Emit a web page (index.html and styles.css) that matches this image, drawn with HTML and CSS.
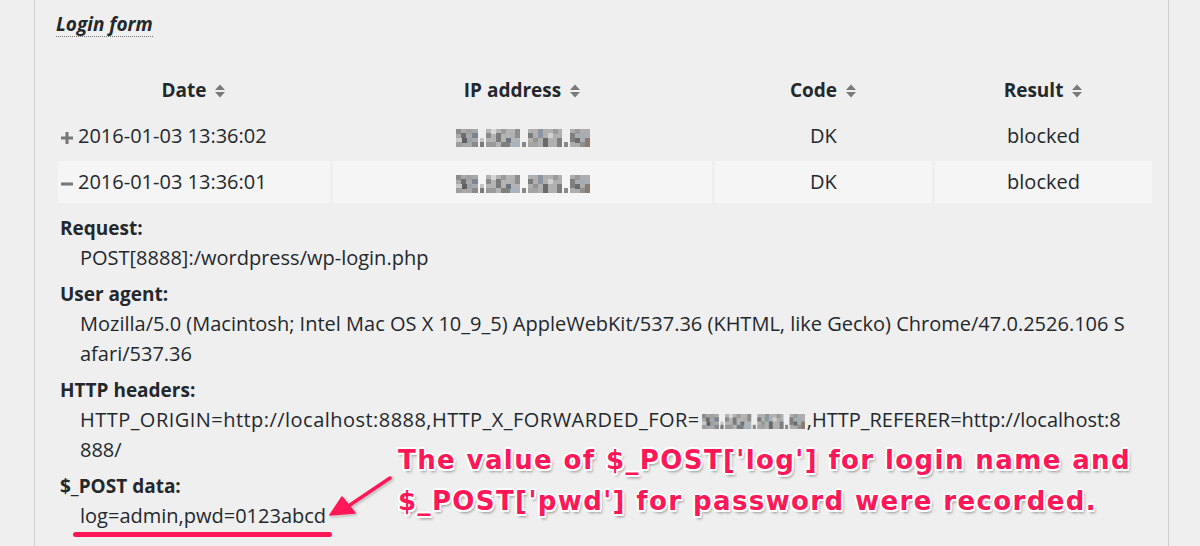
FILE: index.html
```html
<!DOCTYPE html>
<html>
<head>
<meta charset="utf-8">
<link rel="stylesheet" href="styles.css">
</head>
<body>
<svg class="defs" width="0" height="0">
  <defs>
    <symbol id="ip" viewBox="0 0 134 18" preserveAspectRatio="none">
      <rect x="0" y="0" width="22" height="18" fill="#a8a8a8"/>
      <rect x="0" y="0" width="5" height="5" fill="#8c8c8c"/>
      <rect x="5" y="4" width="5" height="5" fill="#6e6e6e"/>
      <rect x="10" y="0" width="6" height="5" fill="#a0a0a0"/>
      <rect x="16" y="4" width="6" height="5" fill="#7d8590"/>
      <rect x="0" y="9" width="6" height="5" fill="#c8c8c8"/>
      <rect x="6" y="9" width="5" height="5" fill="#5f5f5f"/>
      <rect x="11" y="9" width="5" height="5" fill="#9aa3ad"/>
      <rect x="16" y="13" width="6" height="5" fill="#8a8a8a"/>
      <rect x="0" y="13" width="6" height="5" fill="#9e9e9e"/>
      <rect x="24" y="9" width="4" height="9" fill="#c4c4c4"/>
      <rect x="24" y="13" width="4" height="5" fill="#7a7a7a"/>
      <rect x="30" y="0" width="34" height="18" fill="#b4b4b4"/>
      <rect x="30" y="4" width="5" height="5" fill="#8a8a8a"/>
      <rect x="35" y="0" width="5" height="5" fill="#d6d6d6"/>
      <rect x="40" y="4" width="5" height="9" fill="#7a7a7a"/>
      <rect x="45" y="0" width="5" height="5" fill="#9b9b9b"/>
      <rect x="50" y="9" width="5" height="5" fill="#6c7480"/>
      <rect x="55" y="4" width="5" height="5" fill="#b0b0b0"/>
      <rect x="59" y="0" width="5" height="9" fill="#8e8e8e"/>
      <rect x="30" y="13" width="10" height="5" fill="#9a9a9a"/>
      <rect x="45" y="13" width="9" height="5" fill="#7f7f7f"/>
      <rect x="55" y="13" width="9" height="5" fill="#a9b3bd"/>
      <rect x="66" y="13" width="4" height="5" fill="#888888"/>
      <rect x="72" y="0" width="34" height="18" fill="#b0b0b0"/>
      <rect x="72" y="4" width="5" height="5" fill="#7b7b7b"/>
      <rect x="77" y="9" width="5" height="5" fill="#939393"/>
      <rect x="82" y="0" width="5" height="9" fill="#8c95a0"/>
      <rect x="87" y="9" width="5" height="9" fill="#6a6a6a"/>
      <rect x="92" y="4" width="5" height="5" fill="#d0d0d0"/>
      <rect x="97" y="0" width="5" height="5" fill="#9a9a9a"/>
      <rect x="101" y="9" width="5" height="9" fill="#7e7e7e"/>
      <rect x="72" y="13" width="10" height="5" fill="#a4a4a4"/>
      <rect x="108" y="13" width="4" height="5" fill="#8a8a8a"/>
      <rect x="114" y="0" width="20" height="18" fill="#adadad"/>
      <rect x="114" y="4" width="5" height="9" fill="#7f7f7f"/>
      <rect x="119" y="0" width="5" height="5" fill="#9a9a9a"/>
      <rect x="119" y="9" width="5" height="5" fill="#6b6b6b"/>
      <rect x="124" y="4" width="5" height="5" fill="#a3adb8"/>
      <rect x="129" y="9" width="5" height="9" fill="#8a7a70"/>
      <rect x="124" y="13" width="5" height="5" fill="#909090"/>
    </symbol>
    <symbol id="sort" viewBox="0 0 12 16">
      <path d="M1 7 L6 1.5 L11 7 Z M1 9 L6 14.5 L11 9 Z" fill="#7a7a7a"/>
    </symbol>
  </defs>
</svg>

<div class="page">
  <div class="panel">
    <h3 class="title">Login form</h3>
    <table class="log">
      <colgroup>
        <col class="c-date"><col class="c-ip"><col class="c-code"><col class="c-res">
      </colgroup>
      <thead>
        <tr>
          <th>Date <svg class="sort"><use href="#sort"/></svg></th>
          <th>IP address <svg class="sort"><use href="#sort"/></svg></th>
          <th>Code <svg class="sort"><use href="#sort"/></svg></th>
          <th>Result <svg class="sort"><use href="#sort"/></svg></th>
        </tr>
      </thead>
      <tbody>
        <tr>
          <td class="date"><svg class="toggle" viewBox="0 0 12 12"><rect x="0" y="4.5" width="12" height="3" fill="#777"/><rect x="4.5" y="0" width="3" height="12" fill="#777"/></svg>2016-01-03 13:36:02</td>
          <td class="mid"><svg class="ipblur"><use href="#ip"/></svg></td>
          <td class="mid">DK</td>
          <td class="mid">blocked</td>
        </tr>
        <tr class="open">
          <td class="date"><svg class="toggle" viewBox="0 0 12 12"><rect x="0" y="4.5" width="12" height="3" fill="#777"/></svg>2016-01-03 13:36:01</td>
          <td class="mid"><svg class="ipblur"><use href="#ip"/></svg></td>
          <td class="mid">DK</td>
          <td class="mid">blocked</td>
        </tr>
      </tbody>
    </table>
    <dl class="details">
      <dt>Request:</dt>
      <dd>POST[8888]:/wordpress/wp-login.php</dd>
      <dt>User agent:</dt>
      <dd>Mozilla/5.0 (Macintosh; Intel Mac OS X 10_9_5) AppleWebKit/537.36 (KHTML, like Gecko) Chrome/47.0.2526.106 Safari/537.36</dd>
      <dt>HTTP headers:</dt>
      <dd><span class="wide">HTTP_ORIGIN=http://localhost:8888,HTTP_X_FORWARDED_FOR=</span><svg class="ipblur small"><use href="#ip"/></svg>,HTTP_REFERER=http://localhost:8888/</dd>
      <dt>$_POST data:</dt>
      <dd>log=admin,pwd=0123abcd</dd>
    </dl>
  </div>

  <div class="note">The value of $_POST['log'] for login name and<br>$_POST['pwd'] for password were recorded.</div>
  <svg class="arrow" viewBox="0 0 80 60">
    <path d="M70 8 L24 39" stroke="#ff1757" stroke-width="3.5" stroke-linecap="round" fill="none"/>
    <path d="M10 45 L22 27 L35 43 Z" fill="#ff1757" stroke="#ff1757" stroke-width="1.5" stroke-linejoin="round"/>
  </svg>
  <div class="mark"></div>
</div>
</body>
</html>
```

FILE: styles.css
```css
html, body {
  margin: 0;
  padding: 0;
}
body {
  background: #efefef;
  color: #23282d;
  font-family: "Open Sans", "Noto Sans", sans-serif;
  font-size: 20px;
  width: 1200px;
  height: 546px;
  overflow: hidden;
}
.defs {
  position: absolute;
  width: 0;
  height: 0;
}
.page {
  position: relative;
  height: 546px;
}
.panel {
  margin-left: 34px;
  width: 1135px;
  height: 546px;
  border-left: 1px solid #cfcfcf;
  border-right: 1px solid #cfcfcf;
  padding-left: 21px;
  box-sizing: border-box;
}
.title {
  display: inline-block;
  margin: 12px 0 0 0;
  font-size: 19px;
  font-weight: 700;
  font-style: italic;
  line-height: 24px;
  border-bottom: 1px dotted #777;
}
.log {
  margin: 28px 0 0 -1px;
  border-collapse: separate;
  border-spacing: 3px 4px;
  table-layout: fixed;
  width: 1100px;
}
.c-date { width: 272px; }
.c-ip { width: 379px; }
.c-code { width: 217px; }
.c-res { width: 217px; }
.log th {
  height: 42px;
  padding: 0;
  font-size: 19px;
  font-weight: 700;
  text-align: center;
  line-height: 24px;
  vertical-align: middle;
}
.sort {
  width: 12px;
  height: 16px;
  margin-left: 3px;
  vertical-align: -2px;
}
.log td {
  height: 42px;
  padding: 0 3px;
  line-height: 24px;
  vertical-align: middle;
}
.log tr.open td {
  background: #f5f5f5;
}
.log td.mid {
  text-align: center;
}
.toggle {
  width: 12px;
  height: 12px;
  margin-right: 5px;
  vertical-align: -0.5px;
}
.ipblur {
  width: 134px;
  height: 18px;
  vertical-align: -4px;
}
.ipblur.small {
  width: 103px;
  height: 15px;
  margin: 0 2px;
  vertical-align: -2px;
}
.details {
  margin: 6px 0 0 4px;
  line-height: 30px;
}
.details dt {
  font-size: 19px;
  font-weight: 700;
}
.details dd {
  margin: 0 0 6px 20px;
  width: 1048px;
  word-break: break-all;
}
.details .wide {
  letter-spacing: 0.46px;
}
.note {
  position: absolute;
  left: 398px;
  top: 440px;
  font-family: "DejaVu Sans", sans-serif;
  font-weight: 700;
  font-size: 26px;
  letter-spacing: 1.4px;
  line-height: 41px;
  color: #ff1757;
  white-space: nowrap;
  text-shadow:
    2px 0 0 #fff, -2px 0 0 #fff, 0 2px 0 #fff, 0 -2px 0 #fff,
    1.5px 1.5px 0 #fff, -1.5px 1.5px 0 #fff, 1.5px -1.5px 0 #fff, -1.5px -1.5px 0 #fff,
    2px 3px 3px rgba(0, 0, 0, 0.4);
}
.arrow {
  position: absolute;
  left: 320px;
  top: 470px;
  width: 80px;
  height: 60px;
  filter: drop-shadow(0 0 1px #fff) drop-shadow(1px 1px 1px rgba(0,0,0,0.3));
}
.mark {
  position: absolute;
  left: 73px;
  top: 532px;
  width: 259px;
  height: 5px;
  border-radius: 3px;
  background: #ff1757;
}
```
